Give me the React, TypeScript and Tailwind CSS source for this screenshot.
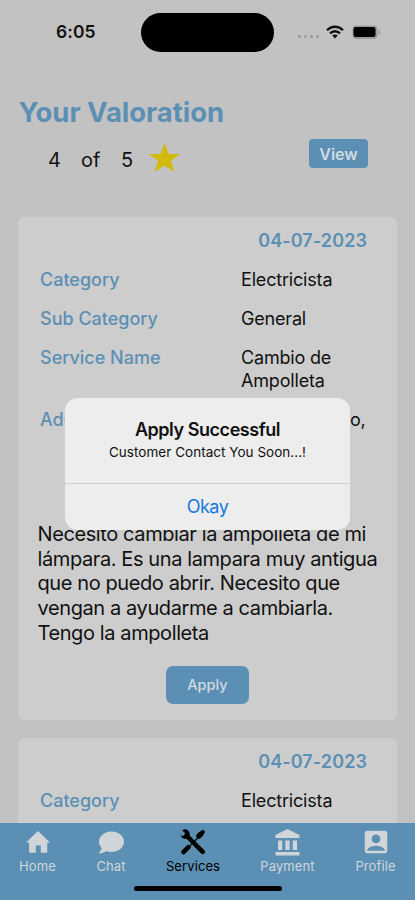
import { FaComment } from 'react-icons/fa';
import { MdAccountBox } from 'react-icons/md';

interface Field {
  label: string;
  lines: string[];
}

interface Service {
  date: string;
  fields: Field[];
  description: string[];
}

const services: Service[] = [
  {
    date: '04-07-2023',
    fields: [
      { label: 'Category', lines: ['Electricista'] },
      { label: 'Sub Category', lines: ['General'] },
      { label: 'Service Name', lines: ['Cambio de', 'Ampolleta'] },
      { label: 'Address', lines: ['Calle Santiago,'] },
    ],
    description: [
      'Necesito cambiar la ampolleta de mi',
      'lámpara. Es una lampara muy antigua',
      'que no puedo abrir. Necesito que',
      'vengan a ayudarme a cambiarla.',
      'Tengo la ampolleta',
    ],
  },
  {
    date: '04-07-2023',
    fields: [{ label: 'Category', lines: ['Electricista'] }],
    description: [],
  },
];

function StatusBar() {
  return (
    <div className="flex h-[64px] shrink-0 items-center">
      <span className="w-[141px] pl-[56px] text-[17.5px] font-semibold tracking-[0.1px] text-[#111]">6:05</span>
      <div className="h-[39px] w-[133px] rounded-full bg-black" />
      <div className="ml-[24px] mt-[8px] flex gap-[3px]">
        {[0, 1, 2, 3].map((dot) => (
          <span key={dot} className="size-[3px] rounded-full bg-[#999]" />
        ))}
      </div>
      <svg className="ml-[7px] h-[14px] w-[18px]" viewBox="0 0 18 14" fill="none" stroke="#111" strokeWidth="2.3">
        <path d="M1 5.2C5.4.6 12.6.6 17 5.2" />
        <path d="M4 8.4c2.8-2.9 7.2-2.9 10 0" />
        <path d="M9 13.4 6.2 10.6c1.6-1.5 4-1.5 5.6 0Z" fill="#111" stroke="none" />
      </svg>
      <svg className="ml-[8px] h-[15px] w-[29px]" viewBox="0 0 29 15">
        <rect x="0.5" y="0.5" width="25" height="13.5" rx="4" fill="#9b9b9b" />
        <path d="M26.5 4.5c2.4 1 2.4 4.5 0 5.5Z" fill="#9b9b9b" />
        <rect x="1.5" y="2" width="22" height="10" rx="2" fill="#000" />
      </svg>
    </div>
  );
}

function HomeIcon() {
  return (
    <svg className="h-[22px] w-[24px]" viewBox="0 0 24 22" fill="currentColor">
      <path d="M12 0 24 11.5h-2.7v9q0 1.2-1.2 1.2h-5.3v-7.2H9.8v7.2H4.3q-1.200 0-1.200-1.200v-9H0Z" />
    </svg>
  );
}

function BankIcon() {
  return (
    <svg className="h-[27px] w-[25px]" viewBox="0 0 25 27" fill="currentColor">
      <path d="M12.5 0 24.5 6v3H.5V6Z" />
      <path d="M3 11.5h4.2V21H3zM10.4 11.5h4.2V21h-4.2zM17.8 11.5H22V21h-4.2z" />
      <path d="M.5 23h24v3.5H.5z" />
    </svg>
  );
}

function ToolsIcon() {
  return (
    <svg className="size-[26px]" viewBox="0 0 26 26" fill="none" stroke="currentColor" strokeLinecap="round">
      <path d="m7.5 7.5 15.2 15.3" strokeWidth="4.6" />
      <path d="M2.2 1.2 5 4l-1 2.6-2.6.5L.6 4.4c-.4 3.4 2.5 6.3 6 5.4l3-3C10.6 3 7.4-.5 3.8.4Z" fill="currentColor" stroke="none" />
      <path d="m3.6 23 4.8-4.8" strokeWidth="4.6" />
      <path d="m9.5 17.2 8-8" strokeWidth="1.3" strokeLinecap="butt" />
      <path d="M15.8 7.5c.6-2.5 3.5-5 7.3-6.7l2 2c-1.7 3.8-4.200 6.900-6.700 7.500Z" fill="currentColor" stroke="none" />
    </svg>
  );
}

function ServiceCard({ service }: { service: Service }) {
  return (
    <div className="h-[503px] shrink-0 rounded-[6px] bg-[#cdcdcd] pt-[4px]">
      <div className="flex h-[39px] items-center justify-end pr-[30px] text-[18px] font-semibold tracking-[0.1px] text-[#5b8fb4]">
        {service.date}
      </div>
      {service.fields.map((field) => (
        <div key={field.label} className="flex py-[8px] pl-[22px] text-[18px] leading-[23px]">
          <div className="w-[201px] font-medium text-[#5b8fb4]">{field.label}</div>
          <div className="tracking-[-0.18px] text-[#111]">
            {field.lines.map((line) => (
              <div key={line} className="whitespace-nowrap">{line}</div>
            ))}
          </div>
        </div>
      ))}
      {service.description.length > 0 && (
        <>
          <div className="mt-[83px] pl-[19.5px] text-[20px] leading-[24.7px] tracking-[-0.4px] text-[#111]">
            {service.description.map((line) => (
              <div key={line} className="whitespace-nowrap">{line}</div>
            ))}
          </div>
          <div className="mt-[20.5px] flex justify-center">
            <button className="h-[38px] w-[83px] rounded-[7px] bg-[#5b8fb4] text-[14.5px] font-medium text-[#d2dbe1]">
              Apply
            </button>
          </div>
        </>
      )}
    </div>
  );
}

const tabs = [
  { label: 'Home', width: 'w-[75px]', icon: <HomeIcon /> },
  { label: 'Chat', width: 'w-[72px]', icon: <FaComment className="size-[25px]" /> },
  { label: 'Services', width: 'w-[92px]', icon: <ToolsIcon /> },
  { label: 'Payment', width: 'w-[97px]', icon: <BankIcon /> },
  { label: 'Profile', width: 'w-[79px]', icon: <MdAccountBox className="size-[30px]" /> },
];

function TabBar() {
  return (
    <nav className="flex h-[77px] shrink-0 flex-col bg-[#5b8fb4]">
      <div className="flex">
        {tabs.map((tab) => (
          <div
            key={tab.label}
            className={`flex flex-col items-center ${tab.width} ${tab.label === 'Services' ? 'text-black' : 'text-[#d0d5d9]'}`}
          >
            <div className="mt-[3px] flex h-[32px] items-center">{tab.icon}</div>
            <span className="text-[13px] leading-[16px] tracking-[0.1px]">{tab.label}</span>
          </div>
        ))}
      </div>
      <div className="mx-auto mt-[12px] h-[5px] w-[148px] rounded-full bg-black" />
    </nav>
  );
}

function Alert() {
  return (
    <div className="absolute left-[65px] top-[398px] h-[132px] w-[285px] rounded-[13px] bg-[#ededed] text-center text-[#111]">
      <div className="h-[86px] border-b border-[#cfcfcf] pt-[20px]">
        <div className="text-[18px] font-semibold leading-[24px] tracking-[-0.45px]">Apply Successful</div>
        <div className="text-[13.5px] leading-[21px] tracking-[0.03px]">Customer Contact You Soon...!</div>
      </div>
      <button className="h-[45px] w-full text-[18px] tracking-[-0.5px] text-[#1679e0]">Okay</button>
    </div>
  );
}

export default function App() {
  return (
    <div className="relative flex h-[900px] w-[415px] flex-col overflow-hidden bg-[#c2c2c2] font-['Inter',sans-serif]">
      <StatusBar />
      <div className="flex h-[153px] shrink-0 flex-col">
        <h1 className="mt-[30px] pl-[18.5px] text-[27.5px] font-bold leading-[36px] tracking-[-0.05px] text-[#5b8fb4]">
          Your Valoration
        </h1>
        <div className="flex h-[48px] items-start pl-[48px] text-[20px] text-[#111]">
          <div className="mt-[15px] flex leading-[30px]">
            <span className="w-[33px]">4</span>
            <span className="w-[40px]">of</span>
            <span className="w-[27px]">5</span>
          </div>
          <svg className="mt-[13px] h-[30px] w-[33px]" viewBox="0 0 33 30" fill="#d2ba09">
            <path d="m16.5 0 4 11H32l-9.2 7 3.6 11-9.9-6.6L6.600 29l3.600-11L1 11h11.500Z" />
          </svg>
          <button className="ml-[128px] mt-[9px] h-[29px] w-[59px] rounded-[4px] bg-[#5b8fb4] text-[16px] font-semibold text-[#d2dbe1]">
            View
          </button>
        </div>
      </div>
      <div className="flex min-h-0 flex-1 flex-col gap-[18px] overflow-hidden px-[18px]">
        {services.map((service, index) => (
          <ServiceCard key={index} service={service} />
        ))}
      </div>
      <TabBar />
      <Alert />
    </div>
  );
}
